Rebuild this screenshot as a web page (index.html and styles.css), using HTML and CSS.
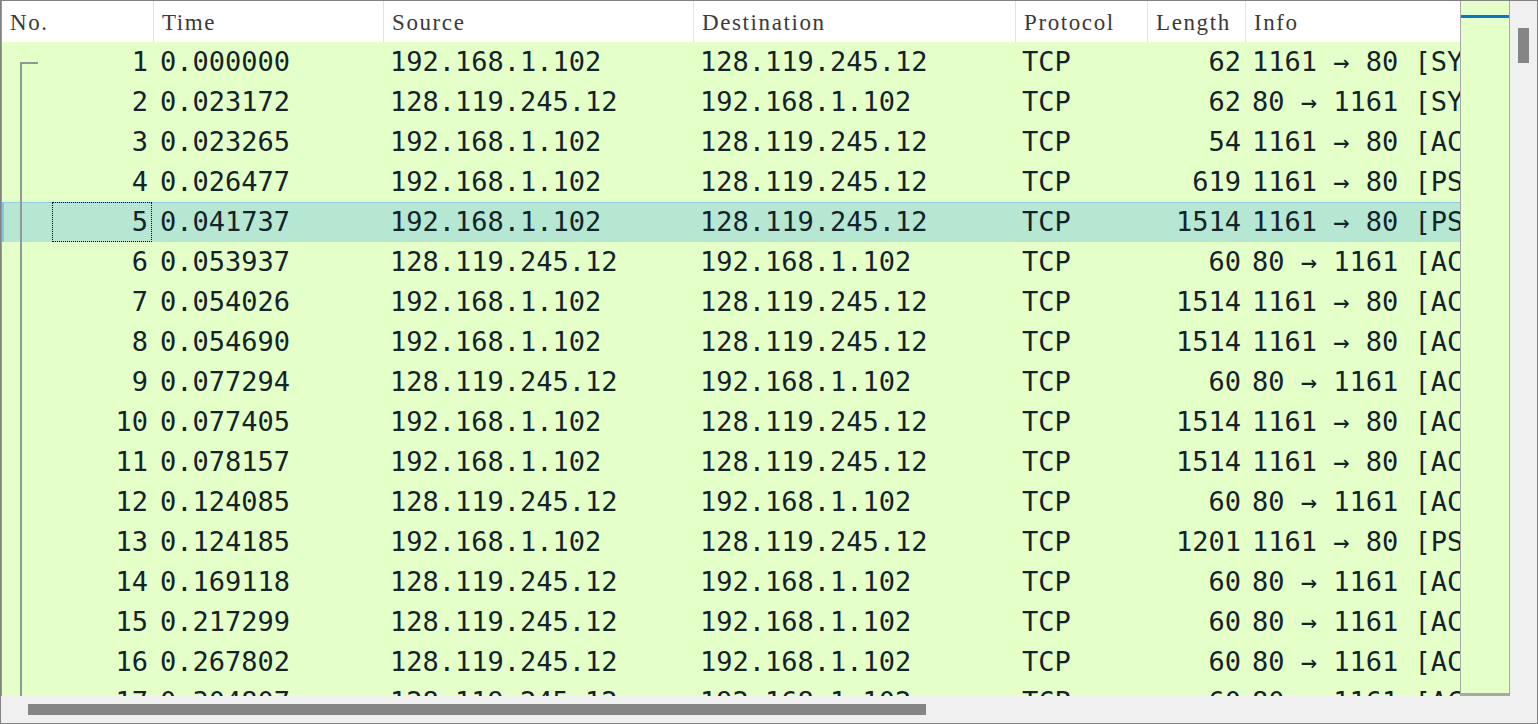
FILE: index.html
```html
<!DOCTYPE html>
<html>
<head>
<meta charset="utf-8">
<link rel="stylesheet" href="styles.css">
</head>
<body>
<div class="frame">
  <div class="viewport">
    <div class="row head">
      <div class="hc">No.</div>
      <div class="hc">Time</div>
      <div class="hc">Source</div>
      <div class="hc">Destination</div>
      <div class="hc">Protocol</div>
      <div class="hc">Length</div>
      <div class="hc last">Info</div>
    </div>
    <div class="body">
      <div class="row pk">
        <div class="no"><svg class="rel" width="50" height="40"><path d="M19 20 V40 M18 21 H36"/></svg><span class="num">1</span></div>
        <div class="c">0.000000</div><div class="c">192.168.1.102</div><div class="c">128.119.245.12</div><div class="c">TCP</div><div class="c len">62</div><div class="c">1161 → 80 [SYN] Seq=0 Win=64240 Len=0 MSS=1460 SACK_PERM=1</div>
      </div>
      <div class="row pk">
        <div class="no"><svg class="rel" width="50" height="40"><path d="M19 0 V40"/></svg><span class="num">2</span></div>
        <div class="c">0.023172</div><div class="c">128.119.245.12</div><div class="c">192.168.1.102</div><div class="c">TCP</div><div class="c len">62</div><div class="c">80 → 1161 [SYN, ACK] Seq=0 Ack=1 Win=29200 Len=0 MSS=1460 SACK_PERM=1</div>
      </div>
      <div class="row pk">
        <div class="no"><svg class="rel" width="50" height="40"><path d="M19 0 V40"/></svg><span class="num">3</span></div>
        <div class="c">0.023265</div><div class="c">192.168.1.102</div><div class="c">128.119.245.12</div><div class="c">TCP</div><div class="c len">54</div><div class="c">1161 → 80 [ACK] Seq=1 Ack=1 Win=64240 Len=0</div>
      </div>
      <div class="row pk">
        <div class="no"><svg class="rel" width="50" height="40"><path d="M19 0 V40"/></svg><span class="num">4</span></div>
        <div class="c">0.026477</div><div class="c">192.168.1.102</div><div class="c">128.119.245.12</div><div class="c">TCP</div><div class="c len">619</div><div class="c">1161 → 80 [PSH, ACK] Seq=1 Ack=1 Win=64240 Len=565</div>
      </div>
      <div class="row pk sel">
        <div class="no"><svg class="rel" width="50" height="40"><path d="M19 0 V40"/></svg><span class="num focus">5</span></div>
        <div class="c">0.041737</div><div class="c">192.168.1.102</div><div class="c">128.119.245.12</div><div class="c">TCP</div><div class="c len">1514</div><div class="c">1161 → 80 [PSH, ACK] Seq=566 Ack=1 Win=64240 Len=1460</div>
      </div>
      <div class="row pk">
        <div class="no"><svg class="rel" width="50" height="40"><path d="M19 0 V40"/></svg><span class="num">6</span></div>
        <div class="c">0.053937</div><div class="c">128.119.245.12</div><div class="c">192.168.1.102</div><div class="c">TCP</div><div class="c len">60</div><div class="c">80 → 1161 [ACK] Seq=1 Ack=566 Win=30080 Len=0</div>
      </div>
      <div class="row pk">
        <div class="no"><svg class="rel" width="50" height="40"><path d="M19 0 V40"/></svg><span class="num">7</span></div>
        <div class="c">0.054026</div><div class="c">192.168.1.102</div><div class="c">128.119.245.12</div><div class="c">TCP</div><div class="c len">1514</div><div class="c">1161 → 80 [ACK] Seq=2026 Ack=1 Win=64240 Len=1460</div>
      </div>
      <div class="row pk">
        <div class="no"><svg class="rel" width="50" height="40"><path d="M19 0 V40"/></svg><span class="num">8</span></div>
        <div class="c">0.054690</div><div class="c">192.168.1.102</div><div class="c">128.119.245.12</div><div class="c">TCP</div><div class="c len">1514</div><div class="c">1161 → 80 [ACK] Seq=3486 Ack=1 Win=64240 Len=1460</div>
      </div>
      <div class="row pk">
        <div class="no"><svg class="rel" width="50" height="40"><path d="M19 0 V40"/></svg><span class="num">9</span></div>
        <div class="c">0.077294</div><div class="c">128.119.245.12</div><div class="c">192.168.1.102</div><div class="c">TCP</div><div class="c len">60</div><div class="c">80 → 1161 [ACK] Seq=1 Ack=2026 Win=33580 Len=0</div>
      </div>
      <div class="row pk">
        <div class="no"><svg class="rel" width="50" height="40"><path d="M19 0 V40"/></svg><span class="num">10</span></div>
        <div class="c">0.077405</div><div class="c">192.168.1.102</div><div class="c">128.119.245.12</div><div class="c">TCP</div><div class="c len">1514</div><div class="c">1161 → 80 [ACK] Seq=4946 Ack=1 Win=64240 Len=1460</div>
      </div>
      <div class="row pk">
        <div class="no"><svg class="rel" width="50" height="40"><path d="M19 0 V40"/></svg><span class="num">11</span></div>
        <div class="c">0.078157</div><div class="c">192.168.1.102</div><div class="c">128.119.245.12</div><div class="c">TCP</div><div class="c len">1514</div><div class="c">1161 → 80 [ACK] Seq=6406 Ack=1 Win=64240 Len=1460</div>
      </div>
      <div class="row pk">
        <div class="no"><svg class="rel" width="50" height="40"><path d="M19 0 V40"/></svg><span class="num">12</span></div>
        <div class="c">0.124085</div><div class="c">128.119.245.12</div><div class="c">192.168.1.102</div><div class="c">TCP</div><div class="c len">60</div><div class="c">80 → 1161 [ACK] Seq=1 Ack=3486 Win=36500 Len=0</div>
      </div>
      <div class="row pk">
        <div class="no"><svg class="rel" width="50" height="40"><path d="M19 0 V40"/></svg><span class="num">13</span></div>
        <div class="c">0.124185</div><div class="c">192.168.1.102</div><div class="c">128.119.245.12</div><div class="c">TCP</div><div class="c len">1201</div><div class="c">1161 → 80 [PSH, ACK] Seq=7866 Ack=1 Win=64240 Len=1147</div>
      </div>
      <div class="row pk">
        <div class="no"><svg class="rel" width="50" height="40"><path d="M19 0 V40"/></svg><span class="num">14</span></div>
        <div class="c">0.169118</div><div class="c">128.119.245.12</div><div class="c">192.168.1.102</div><div class="c">TCP</div><div class="c len">60</div><div class="c">80 → 1161 [ACK] Seq=1 Ack=4946 Win=39420 Len=0</div>
      </div>
      <div class="row pk">
        <div class="no"><svg class="rel" width="50" height="40"><path d="M19 0 V40"/></svg><span class="num">15</span></div>
        <div class="c">0.217299</div><div class="c">128.119.245.12</div><div class="c">192.168.1.102</div><div class="c">TCP</div><div class="c len">60</div><div class="c">80 → 1161 [ACK] Seq=1 Ack=6406 Win=42340 Len=0</div>
      </div>
      <div class="row pk">
        <div class="no"><svg class="rel" width="50" height="40"><path d="M19 0 V40"/></svg><span class="num">16</span></div>
        <div class="c">0.267802</div><div class="c">128.119.245.12</div><div class="c">192.168.1.102</div><div class="c">TCP</div><div class="c len">60</div><div class="c">80 → 1161 [ACK] Seq=1 Ack=7866 Win=45260 Len=0</div>
      </div>
      <div class="row pk">
        <div class="no"><svg class="rel" width="50" height="40"><path d="M19 0 V40"/></svg><span class="num">17</span></div>
        <div class="c">0.304807</div><div class="c">128.119.245.12</div><div class="c">192.168.1.102</div><div class="c">TCP</div><div class="c len">60</div><div class="c">80 → 1161 [ACK] Seq=1 Ack=9013 Win=48180 Len=0</div>
      </div>
    </div>
  </div>
  <div class="minimap"><div class="mark"></div></div>
  <div class="vscroll"><div class="vthumb"></div></div>
  <div class="hscroll"><div class="hthumb"></div></div>
  <div class="corner"></div>
</div>
</body>
</html>
```

FILE: styles.css
```css
html, body {
  margin: 0;
  padding: 0;
  background: #ffffff;
}

.frame {
  width: 1538px;
  height: 724px;
  box-sizing: border-box;
  border: 1px solid #828282;
  display: grid;
  grid-template-columns: 1459px 50px 27px;
  grid-template-rows: 695px 27px;
  overflow: hidden;
}

.viewport {
  overflow: hidden;
  display: flex;
  flex-direction: column;
  border-left: 1px solid #9a9a9a;
  background: #ffffff;
}

.row {
  display: grid;
  grid-template-columns: 152px 230px 310px 322px 132px 98px 1fr;
  white-space: nowrap;
}

.head {
  height: 41px;
  flex: none;
  background: #ffffff;
}

.hc {
  box-sizing: border-box;
  border-right: 1px solid #e3e3e3;
  font-family: "Liberation Serif", serif;
  font-size: 23px;
  letter-spacing: 1.6px;
  line-height: 43px;
  color: #3a3a3a;
  padding-left: 8px;
  overflow: hidden;
}

.hc.last {
  border-right: none;
}

.body {
  flex: 1;
  overflow: hidden;
  background: #e4ffc7;
}

.pk {
  height: 40px;
  background: #e4ffc7;
  font-family: "DejaVu Sans Mono", monospace;
  font-size: 27px;
  line-height: 40px;
  color: #13232b;
}

.pk.sel {
  background: #b5e7d3;
  box-shadow: inset 2px 0 0 #86c6de, inset 0 1px 0 #92cfe2;
}

.no {
  display: flex;
  align-items: stretch;
}

.rel {
  flex: none;
  display: block;
}

.rel path {
  fill: none;
  stroke: #929898;
  stroke-width: 2;
}

.num {
  flex: none;
  width: 100px;
  box-sizing: border-box;
  border: 1px dotted transparent;
  text-align: right;
  padding-right: 3px;
  line-height: 37px;
}

.num.focus {
  border-color: #000000;
}

.c {
  padding-left: 6px;
  overflow: hidden;
  line-height: 39px;
}

.c.len {
  text-align: right;
  padding-left: 0;
  padding-right: 5px;
}

.minimap {
  box-sizing: border-box;
  background: #e4ffc7;
  border-left: 1px solid #a8a8a8;
  border-right: 1px solid #a8a8a8;
  border-bottom: 3px solid #a8a8a8;
  padding-top: 14px;
}

.mark {
  height: 3px;
  background: #0078d7;
}

.vscroll {
  background: #f0f0f0;
  padding-top: 27px;
  padding-left: 8px;
}

.vthumb {
  width: 11px;
  height: 35px;
  background: #858585;
}

.hscroll {
  grid-column: 1 / 3;
  background: #f0f0f0;
  padding-top: 8px;
  padding-left: 27px;
}

.hthumb {
  width: 898px;
  height: 11px;
  background: #858585;
}

.corner {
  background: #f0f0f0;
}
```
